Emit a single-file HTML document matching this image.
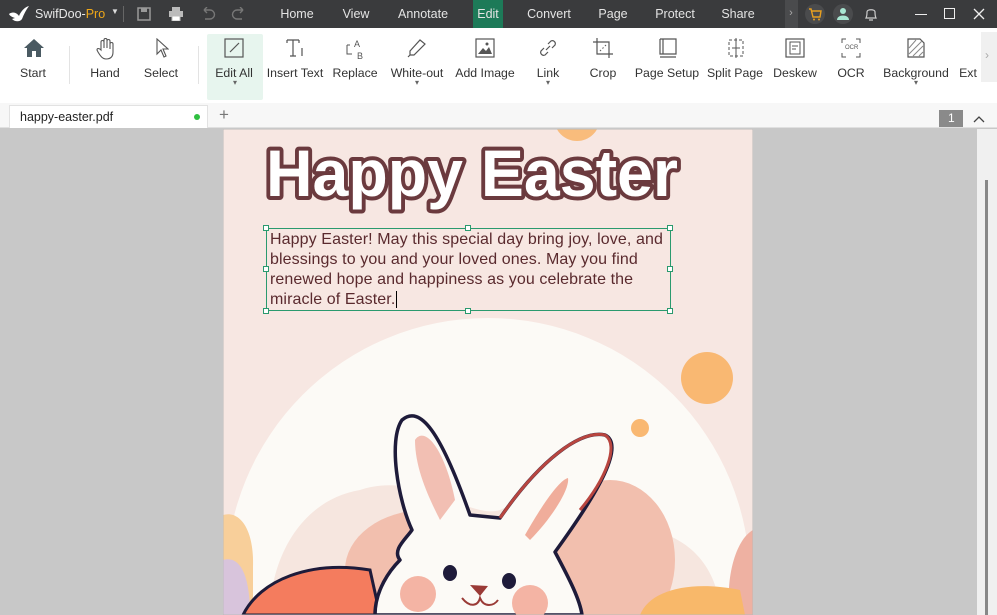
<!DOCTYPE html>
<html><head><meta charset="utf-8"><style>
*{margin:0;padding:0;box-sizing:border-box}
html,body{width:997px;height:615px;overflow:hidden}
body{position:relative;font-family:"Liberation Sans",sans-serif;background:#c8c8c8}
.a{position:absolute}
#tb{left:0;top:0;width:997px;height:28px;background:#3a3b3d}
.m{position:absolute;top:7px;font-size:12.5px;color:#e4e4e4;transform:translateX(-50%)}
#tool{left:0;top:28px;width:997px;height:75px;background:#fff}
.l{position:absolute;top:38px;font-size:12.3px;color:#333;transform:translateX(-50%);white-space:nowrap}
.ic{position:absolute;top:10px}
#tabs{left:0;top:103px;width:997px;height:25px;background:#f7f7f7;border-bottom:1px solid #e0e0e0}
.t{font-size:16px;letter-spacing:0.1px;color:#5a2a2e;white-space:nowrap;position:absolute;left:270px}
</style></head><body>
<div id="tb" class="a">
<svg class="a" style="left:8px;top:5px" width="22" height="18" viewBox="0 0 22 18"><path d="M1 9 C5 6 9 8 11 11 C13 6 17 2 21 1 C18 5 16 9 14 14 C12 17 7 17 4 14 L7 13 C4 12 2 11 1 9Z" fill="#fff"/></svg>
<span class="a" style="left:35px;top:7px;font-size:12.5px;color:#e8e8e8">SwifDoo-<span style="color:#f0a818">Pro</span></span>
<span class="a" style="left:111px;top:7px;font-size:8px;color:#ddd">▼</span>
<div class="a" style="left:123px;top:6px;width:1px;height:16px;background:#666"></div>
<svg class="a" style="left:137px;top:7px" width="14" height="14"><rect x="1" y="1" width="12" height="12" fill="none" stroke="#999" stroke-width="1.5"/><rect x="4" y="1" width="6" height="4" fill="#999"/></svg>
<svg class="a" style="left:168px;top:7px" width="16" height="14"><rect x="4" y="0" width="8" height="4" fill="#bbb"/><rect x="1" y="4" width="14" height="6" fill="#bbb"/><rect x="4" y="9" width="8" height="5" fill="#fff" stroke="#bbb"/></svg>
<svg class="a" style="left:200px;top:7px" width="16" height="14"><path d="M4 3 H10 A4 4 0 0 1 10 12 H5 M4 3 L7 0 M4 3 L7 6" fill="none" stroke="#777" stroke-width="1.4"/></svg>
<svg class="a" style="left:231px;top:7px" width="16" height="14"><path d="M12 3 H6 A4 4 0 0 0 6 12 H11 M12 3 L9 0 M12 3 L9 6" fill="none" stroke="#777" stroke-width="1.4"/></svg>
<span class="m" style="left:297px">Home</span><span class="m" style="left:356px">View</span><span class="m" style="left:423px">Annotate</span>
<div class="a" style="left:473px;top:0;width:30px;height:28px;background:#1d7a58"></div><span class="m" style="left:488px">Edit</span>
<span class="m" style="left:549px">Convert</span><span class="m" style="left:613px">Page</span><span class="m" style="left:675px">Protect</span><span class="m" style="left:738px">Share</span>
<div class="a" style="left:785px;top:0;width:13px;height:28px;background:#4a4b4d"></div><span class="m" style="left:791px;color:#aaa;font-size:11px">›</span>
<div class="a" style="left:805px;top:4px;width:20px;height:20px;border-radius:10px;background:#4a4b4d"></div>
<svg class="a" style="left:808px;top:7px" width="14" height="14"><path d="M1 2 H3 L5 10 H12 L13 4 H4" fill="none" stroke="#e8a020" stroke-width="1.4"/><circle cx="6" cy="12.5" r="1" fill="#e8a020"/><circle cx="11" cy="12.5" r="1" fill="#e8a020"/></svg>
<div class="a" style="left:833px;top:4px;width:20px;height:20px;border-radius:10px;background:#4a4b4d"></div>
<svg class="a" style="left:837px;top:7px" width="12" height="14"><circle cx="6" cy="4" r="3" fill="#a8e6d2"/><path d="M0 13 C0 7 12 7 12 13Z" fill="#a8e6d2"/></svg>
<svg class="a" style="left:864px;top:6px" width="14" height="16"><path d="M2 12 C3 10 3 8 3 6 C3 3 11 3 11 6 C11 8 11 10 12 12Z M5 14 H9" fill="none" stroke="#ccc" stroke-width="1.2"/></svg>
<div class="a" style="left:915px;top:14px;width:12px;height:1px;background:#eee"></div>
<div class="a" style="left:944px;top:8px;width:11px;height:11px;border:1.3px solid #eee"></div>
<svg class="a" style="left:973px;top:8px" width="12" height="12"><path d="M1 1 L11 11 M11 1 L1 11" stroke="#eee" stroke-width="1.3"/></svg>
</div>

<div id="tool" class="a">
<div class="a" style="left:207px;top:6px;width:56px;height:66px;background:#e7f5ee;border-radius:2px"></div>
<div class="a" style="left:69px;top:18px;width:1px;height:38px;background:#e3e3e3"></div>
<div class="a" style="left:198px;top:18px;width:1px;height:38px;background:#e3e3e3"></div>
<div class="a" style="left:981px;top:4px;width:16px;height:50px;background:#f0f0f0"></div><span class="a" style="left:985px;top:20px;color:#aaa;font-size:12px">›</span>
<svg class="ic" style="left:23px" width="22" height="20"><path d="M11 1 L21 10 H18 V19 H13 V13 H9 V19 H4 V10 H1Z" fill="#4a5a62"/></svg>
<svg class="ic" style="left:96px" width="18" height="22"><path d="M5 12 V4 a1.5 1.5 0 0 1 3 0 V10 V2 a1.5 1.5 0 0 1 3 0 V10 V3 a1.5 1.5 0 0 1 3 0 V11 V6 a1.5 1.5 0 0 1 3 0 V14 C17 19 14 21 10 21 C7 21 5 19 2 14 L1 12 C1 10 3 10 5 12Z" fill="none" stroke="#555" stroke-width="1.1"/></svg>
<svg class="ic" style="left:155px" width="14" height="20"><path d="M2 1 L2 16 L6 12 L9 19 L11 18 L8 11 L13 11Z" fill="none" stroke="#555" stroke-width="1.1"/></svg>
<svg class="ic" style="left:224px" width="20" height="20"><rect x="1" y="1" width="18" height="18" fill="none" stroke="#555" stroke-width="1.2"/><path d="M6 14 L15 5" stroke="#555" stroke-width="1.2"/></svg>
<svg class="ic" style="left:286px" width="20" height="20"><path d="M1 2 H13 M7 2 V18 M4 18 H10 M1 2 V5 M13 2 V5 M16 10 V18" fill="none" stroke="#555" stroke-width="1.2"/></svg>
<svg class="ic" style="left:344px" width="22" height="22"><path d="M3 7 V16 H8 M3 7 H6" fill="none" stroke="#555"/><text x="10" y="9" font-size="9" fill="#555" font-family="Liberation Sans">A</text><text x="13" y="21" font-size="9" fill="#555" font-family="Liberation Sans">B</text></svg>
<svg class="ic" style="left:407px" width="20" height="20"><path d="M3 13 L13 2 L18 6 L7 17 H3Z M3 17 L1 19" fill="none" stroke="#555" stroke-width="1.2"/></svg>
<svg class="ic" style="left:475px" width="20" height="20"><rect x="1" y="1" width="18" height="18" fill="none" stroke="#555" stroke-width="1.2"/><path d="M3 16 L8 10 L11 13 L14 9 L17 16Z" fill="#555"/><circle cx="12" cy="6" r="1.5" fill="#555"/></svg>
<svg class="ic" style="left:538px" width="20" height="20"><path d="M8 12 L12 8 M6 10 L3 13 a3 3 0 0 0 4 4 L10 14 M10 6 L13 3 a3 3 0 0 1 4 4 L14 10" fill="none" stroke="#555" stroke-width="1.2"/></svg>
<svg class="ic" style="left:593px" width="20" height="20"><path d="M4 0 V16 H20 M0 4 H16 V20" fill="none" stroke="#555" stroke-width="1.2"/><path d="M7 13 L13 7" stroke="#555" stroke-dasharray="1.5 2"/></svg>
<svg class="ic" style="left:658px" width="20" height="20"><path d="M2 1 V16 H18 V1 H2 M5 1 V16 M2 19 H18" fill="none" stroke="#555" stroke-width="1.2"/></svg>
<svg class="ic" style="left:726px" width="20" height="20"><path d="M3 2 H17 V18 H3Z" fill="none" stroke="#555" stroke-dasharray="3 2"/><path d="M10 0 V20 M6 10 H14" stroke="#555"/></svg>
<svg class="ic" style="left:785px" width="20" height="20"><rect x="1" y="1" width="18" height="18" fill="none" stroke="#555" stroke-width="1.2"/><rect x="5" y="4" width="10" height="12" fill="none" stroke="#555"/><path d="M7 8 H13 M7 11 H11" stroke="#555"/></svg>
<svg class="ic" style="left:841px" width="20" height="20"><path d="M1 5 V1 H5 M15 1 H19 V5 M19 15 V19 H15 M5 19 H1 V15" fill="none" stroke="#555"/><text x="4" y="11" font-size="6" fill="#555" font-family="Liberation Sans">OCR</text></svg>
<svg class="ic" style="left:906px" width="20" height="20"><path d="M2 1 H14 L18 5 V19 H2Z" fill="none" stroke="#555" stroke-width="1.2"/><path d="M3 10 L10 2 M3 16 L16 3 M7 18 L17 8 M13 18 L17 14" stroke="#888"/></svg>
<span class="l" style="left:33px">Start</span><span class="l" style="left:105px">Hand</span><span class="l" style="left:161px">Select</span><span class="l" style="left:234px">Edit All</span><span class="l" style="left:295px">Insert Text</span><span class="l" style="left:355px">Replace</span><span class="l" style="left:417px">White-out</span><span class="l" style="left:485px">Add Image</span><span class="l" style="left:548px">Link</span><span class="l" style="left:603px">Crop</span><span class="l" style="left:667px">Page Setup</span><span class="l" style="left:735px">Split Page</span><span class="l" style="left:795px">Deskew</span><span class="l" style="left:851px">OCR</span><span class="l" style="left:916px">Background</span><span class="l" style="left:968px">Ext</span>
<span class="l" style="left:235px;top:50px;font-size:8px;color:#666">▾</span><span class="l" style="left:417px;top:50px;font-size:8px;color:#666">▾</span><span class="l" style="left:548px;top:50px;font-size:8px;color:#666">▾</span><span class="l" style="left:916px;top:50px;font-size:8px;color:#666">▾</span>
</div>

<div id="tabs" class="a">
<div class="a" style="left:9px;top:2px;width:199px;height:23px;background:#fff;border:1px solid #e2e2e2;border-bottom:none"></div>
<span class="a" style="left:20px;top:7px;font-size:12.5px;color:#222">happy-easter.pdf</span>
<div class="a" style="left:194px;top:11px;width:6px;height:6px;border-radius:3px;background:#2fc040"></div>
<span class="a" style="left:219px;top:2px;font-size:17px;color:#777">+</span>
<div class="a" style="left:939px;top:7px;width:24px;height:17px;background:#8a8a8a"></div><span class="a" style="left:948px;top:8px;font-size:12px;color:#fff">1</span>
<svg class="a" style="left:973px;top:12px" width="12" height="8"><path d="M1 7 L6 2 L11 7" fill="none" stroke="#444" stroke-width="1.3"/></svg>
</div>

<div class="a" style="left:977px;top:129px;width:20px;height:486px;background:#f0f0f0"></div>
<div class="a" style="left:985px;top:180px;width:3px;height:435px;background:#888"></div>

<svg class="a" style="left:223px;top:129px" width="530" height="486" viewBox="223 129 530 486">
<rect x="223" y="129" width="530" height="486" fill="#f7e7e2"/>
<circle cx="577" cy="118" r="23" fill="#f9bc7c"/>
<circle cx="488" cy="580" r="262" fill="#fcfaf6"/>
<circle cx="707" cy="378" r="26" fill="#f9b872"/>
<circle cx="640" cy="428" r="9" fill="#f9b872"/>
<path d="M270 615 C270 560 300 500 360 490 C420 470 470 520 500 510 C560 480 620 500 650 530 C700 540 720 580 720 615Z" fill="#f6e6df"/>
<ellipse cx="425" cy="570" rx="80" ry="60" fill="#f2bfae"/>
<ellipse cx="610" cy="560" rx="65" ry="80" fill="#f2bfae"/>
<path d="M223 515 C240 510 255 530 253 570 L253 615 H223Z" fill="#f8cf9a"/>
<path d="M223 560 C240 555 250 575 250 615 H223Z" fill="#d8c4dc"/>
<path d="M753 530 C735 540 725 580 730 615 H753Z" fill="#eeb1a2"/>
<path d="M243 615 C260 580 310 560 370 570 L380 615Z" fill="#f47c5e" stroke="#1e1b3a" stroke-width="3"/>
<path d="M640 615 C650 590 690 580 740 590 L745 615Z" fill="#f8b86a"/>
<path d="M412 530 C398 500 388 440 402 420 C420 405 440 430 470 515 L500 518 C540 460 580 430 605 435 C625 445 600 490 555 552 C570 580 580 600 582 615 H375 C375 590 390 570 400 560 C392 550 405 540 412 530Z" fill="#fcfaf6" stroke="#1e1b3a" stroke-width="3.5" stroke-linejoin="round"/>
<path d="M500 518 C540 460 580 430 605 435 C620 445 605 480 580 510" fill="none" stroke="#b8453f" stroke-width="3"/>
<path d="M415 440 C425 425 445 450 455 500 L440 520 C430 500 415 470 415 440Z" fill="#f2bfb3"/>
<path d="M525 535 C545 500 560 480 568 478 C570 490 550 520 530 540Z" fill="#f0ad9b"/>
<circle cx="418" cy="594" r="18" fill="#f4b4a4"/><circle cx="530" cy="603" r="18" fill="#f4b4a4"/>
<ellipse cx="450" cy="573" rx="7" ry="8" fill="#1e1b3a"/><ellipse cx="509" cy="581" rx="7" ry="8" fill="#1e1b3a"/>
<path d="M470 585 L488 586 L480 596Z" fill="#9a3a36"/>
<path d="M462 598 C470 608 478 606 480 598 C484 608 494 606 498 600" fill="none" stroke="#9a3a36" stroke-width="2"/>
<rect x="223" y="129" width="530" height="486" fill="none" stroke="#bbb"/>
<text x="266" y="196" font-family="Liberation Sans" font-weight="bold" font-size="66" fill="#fff" stroke="#6b3a3e" stroke-width="8" paint-order="stroke" stroke-linejoin="round" textLength="412" lengthAdjust="spacingAndGlyphs">Happy Easter</text>
<rect x="266.5" y="228.5" width="404" height="82" fill="none" stroke="#2a9a6e" stroke-width="1"/>
<g fill="#fff" stroke="#2a9a6e"><rect x="263.5" y="225.5" width="5" height="5"/><rect x="465.5" y="225.5" width="5" height="5"/><rect x="667.5" y="225.5" width="5" height="5"/><rect x="263.5" y="266.5" width="5" height="5"/><rect x="667.5" y="266.5" width="5" height="5"/><rect x="263.5" y="308.5" width="5" height="5"/><rect x="465.5" y="308.5" width="5" height="5"/><rect x="667.5" y="308.5" width="5" height="5"/></g>
</svg>
<div class="t" style="top:231px">Happy Easter! May this special day bring joy, love, and</div>
<div class="t" style="top:251px">blessings to you and your loved ones. May you find</div>
<div class="t" style="top:271px">renewed hope and happiness as you celebrate the</div>
<div class="t" style="top:291px">miracle of Easter.<span style="border-left:1px solid #000;margin-left:1px"></span></div>
</body></html>
